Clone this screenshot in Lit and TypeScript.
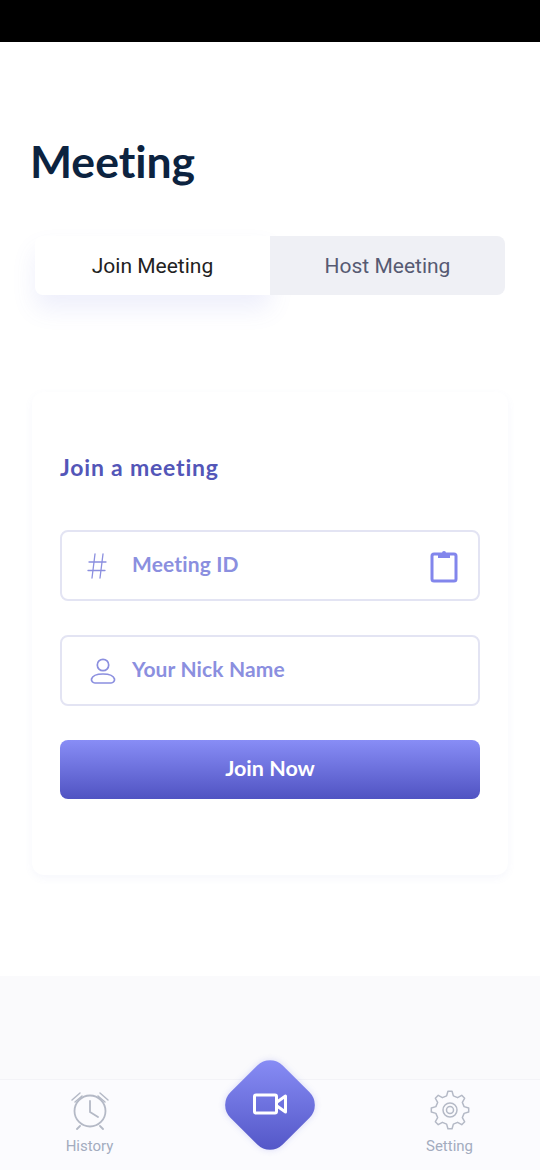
import { LitElement, html, css, svg } from "lit";
import { customElement } from "lit/decorators.js";

// scalloped outline for the settings gear, teeth alternate between two radii
const gearPath = () => {
  const teeth = 8;
  const pts: string[] = [];
  for (let i = 0; i < teeth; i++) {
    const base = (i / teeth) * Math.PI * 2 - Math.PI / 2;
    const step = (Math.PI * 2) / teeth;
    for (const [off, r] of [[-0.3, 14.5], [-0.14, 18.8], [0.14, 18.8], [0.3, 14.5]]) {
      const a = base + off * step;
      pts.push(`${(20 + r * Math.cos(a)).toFixed(2)} ${(20 + r * Math.sin(a)).toFixed(2)}`);
    }
  }
  return `M${pts.join("L")}Z`;
};

@customElement("app-root")
export class AppRoot extends LitElement {
  static styles = css`
    :host {
      display: block;
      width: 540px;
      height: 1170px;
      background: #fff;
      font-family: "Lato", "Noto Sans", sans-serif;
      font-variant-ligatures: none;
      overflow: hidden;
    }
    .page {
      display: flex;
      flex-direction: column;
      height: 1170px;
    }
    .status {
      height: 42px;
      background: #000;
    }
    .main {
      height: 934px;
      box-sizing: border-box;
      padding: 89px 32px 0;
      background: #fff;
    }
    h1 {
      margin: 0 0 0 -2px;
      font-size: 44.5px;
      line-height: 60px;
      font-weight: 700;
      color: #0c2340;
    }
    .tabs {
      display: flex;
      margin: 45px 3px 0;
      height: 59px;
      font-family: "Roboto", sans-serif;
      font-size: 21px;
    }
    .tab {
      flex: 1;
      display: flex;
      align-items: center;
      justify-content: center;
      position: relative;
      color: #565a72;
      background: #eff0f5;
      border-radius: 0 8px 8px 0;
    }
    .tab.active {
      background: #fff;
      color: #222;
      border-radius: 8px 0 0 8px;
      box-shadow: 0 14px 24px rgba(100, 110, 220, 0.11);
    }
    .card {
      margin-top: 97px;
      height: 483px;
      box-sizing: border-box;
      padding: 59px 28px 0;
      border-radius: 12px;
      box-shadow: 0 3px 8px rgba(110, 115, 200, 0.06);
      display: flex;
      flex-direction: column;
    }
    h2 {
      margin: 0;
      font-size: 23px;
      line-height: 32px;
      font-weight: 700;
      letter-spacing: 0.8px;
      color: #5356b8;
    }
    .field {
      display: flex;
      align-items: center;
      height: 71px;
      box-sizing: border-box;
      border: 2px solid #e3e4f3;
      border-radius: 8px;
      font-size: 21px;
      font-weight: 700;
      letter-spacing: 0.15px;
      color: #8b8fdf;
      padding: 0 20px 0 0;
    }
    .field.first {
      margin-top: 47px;
    }
    .field + .field {
      margin-top: 34px;
    }
    .lead {
      width: 70px;
      box-sizing: border-box;
      flex: none;
      display: flex;
      justify-content: center;
    }
    .lead.person {
      padding-left: 11px;
    }
    .label {
      flex: 1;
      padding-bottom: 5px;
    }
    .btn {
      margin-top: 34px;
      height: 59px;
      box-sizing: border-box;
      padding-bottom: 3px;
      display: flex;
      align-items: center;
      justify-content: center;
      border-radius: 8px;
      background: linear-gradient(#888df6, #5053c2);
      color: #fff;
      font-size: 21.5px;
      font-weight: 700;
    }
    .spacer {
      flex: 1;
      background: #fafafc;
    }
    nav {
      position: relative;
      height: 91px;
      display: flex;
      justify-content: space-between;
      padding: 0 30.5px 0 29.5px;
      box-sizing: border-box;
      background: #fbfbfe;
      border-top: 1px solid #f3f3f7;
    }
    .nav-item {
      width: 120px;
      display: flex;
      flex-direction: column;
      align-items: center;
      padding-top: 10px;
      font-family: "Roboto", sans-serif;
      font-size: 15px;
      line-height: 20px;
      color: #a3acbf;
    }
    .nav-item svg {
      margin-bottom: 6px;
    }
    .fab {
      position: absolute;
      left: 233px;
      top: -12px;
      width: 74px;
      height: 74px;
      border-radius: 18px;
      transform: rotate(45deg);
      background: linear-gradient(135deg, #8b90f8, #5053c4);
      box-shadow: 0 0 6px rgba(110, 115, 230, 0.25);
    }
    .fab-icon {
      position: absolute;
      left: 253px;
      top: 13px;
      display: flex;
    }
  `;

  render() {
    return html`
      <div class="page">
        <div class="status"></div>
        <div class="main">
          <h1>Meeting</h1>
          <div class="tabs">
            <div class="tab active">Join Meeting</div>
            <div class="tab">Host Meeting</div>
          </div>
          <div class="card">
            <h2>Join a meeting</h2>
            <div class="field first">
              <div class="lead">
                <svg width="24" height="30" viewBox="0 0 24 30" fill="none" stroke="#8b8fdf" stroke-width="1.3" stroke-linecap="round">
                  <path d="M10 3 7 27M18 3l-3 24M4 11h17M3 19.500h17" />
                </svg>
              </div>
              <span class="label">Meeting ID</span>
              <svg width="28" height="34" viewBox="0 0 28 34" fill="none">
                <rect x="2" y="5" width="24" height="27" rx="2" stroke="#8286ec" stroke-width="3" />
                <path d="M8 4h4a2 2 0 0 1 4 0h4v5H8z" fill="#8286ec" />
              </svg>
            </div>
            <div class="field">
              <div class="lead person">
                <svg width="28" height="28" viewBox="0 0 28 28" fill="none" stroke="#8b8fdf" stroke-width="1.7">
                  <circle cx="14" cy="8" r="5.700" />
                  <path d="M6 26h16a3.500 3.500 0 0 0 3.500-4c-1-3.500-6-5-11.500-5S3.500 18.500 2.500 22A3.500 3.500 0 0 0 6 26z" />
                </svg>
              </div>
              <span class="label">Your Nick Name</span>
            </div>
            <div class="btn">Join Now</div>
          </div>
        </div>
        <div class="spacer"></div>
        <nav>
          <div class="nav-item">
            <svg width="40" height="40" viewBox="0 0 40 40" fill="none" stroke="#b4b9c6" stroke-width="1.800" stroke-linecap="round">
              <circle cx="20" cy="21" r="15.500" />
              <path d="M20 11v11l8 5M10 36l-3 3M30 36l3 3" />
              <path d="M2 10 10 3M5 12l7-6M38 10l-8-7M35 12l-7-6" stroke-width="1.500" />
            </svg>
            History
          </div>
          <div class="nav-item">
            <svg width="40" height="40" viewBox="0 0 40 40" fill="none" stroke="#b4b9c6" stroke-width="1.500" stroke-linejoin="round">
              ${svg`<path d=${gearPath()} />`}
              <circle cx="20" cy="20" r="7" />
              <circle cx="20" cy="20" r="3.500" />
            </svg>
            Setting
          </div>
          <div class="fab"></div>
          <div class="fab-icon">
            <svg width="34" height="22" viewBox="0 0 34 22" fill="none" stroke="#fff" stroke-width="3" stroke-linejoin="round">
              <rect x="1.500" y="2" width="22" height="18" rx="1.500" />
              <path d="M24 9 32.500 3v16L24 13" />
            </svg>
          </div>
        </nav>
      </div>
    `;
  }
}
